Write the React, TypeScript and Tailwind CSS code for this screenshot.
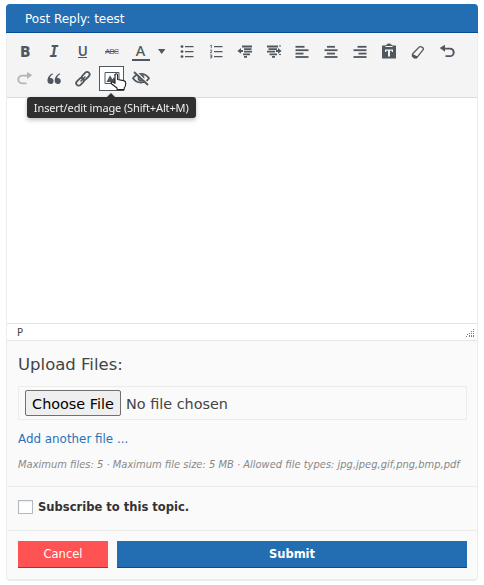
import React from "react";

const ink = "#50575e";

function Cell({ children, active = false }: { children: React.ReactNode; active?: boolean }) {
  return (
    <div className="flex h-[27px] w-[28.85px] shrink-0 items-center justify-center">
      <div
        className={
          active
            ? "flex h-[25px] w-[25px] items-center justify-center border border-[#50575e] bg-white"
            : "flex h-[25px] w-[25px] items-center justify-center"
        }
      >
        {children}
      </div>
    </div>
  );
}

function Icon({ children, className = "" }: { children: React.ReactNode; className?: string }) {
  return (
    <svg width="20" height="20" viewBox="0 0 20 20" fill={ink} className={"block shrink-0 " + className}>
      {children}
    </svg>
  );
}

function Bars({ rows }: { rows: number[][] }) {
  return (
    <Icon>
      {rows.map(([x, w], i) => (
        <rect key={i} x={x} y={3.9 + i * 3.4} width={w} height="1.8" />
      ))}
    </Icon>
  );
}

function IndentIcon({ inward = false }: { inward?: boolean }) {
  return (
    <Icon>
      {inward ? (
        <path d="M3 3.5h11v1.9H3zM15 3.5h2v1h-2zM4.5 6.2h8.5v1.7H4.5zM3 8.7h8v1.7H3zM5.5 11.4H13v1.8H5.5zM15 12.1h2v1h-2zM8 14.1h3v1.6H8zM12 7.9h2V6.1l3.6 2.8-3.6 2.8V9.9h-2z" />
      ) : (
        <path d="M7 3.5h10v1.9H7zM9 6.2h7.5v1.7H9zM9 8.7h8v1.7H9zM8 11.4h7v1.8H8zM9 14.1h3v1.6H9zM8 7.9H6V6.1L2.4 8.9 6 11.7V9.9h2z" />
      )}
    </Icon>
  );
}

function Toolbar() {
  return (
    <div className="h-[65px] border-b border-[#dddddd] bg-[#f4f4f4] pt-[5px] pl-[3.8px] font-['Noto_Sans',sans-serif] text-[#50575e]">
      <div className="flex">
        <Cell><span className="pb-px text-[15.5px] leading-5 font-extrabold">B</span></Cell>
        <Cell><span className="font-['DejaVu_Sans_Mono',monospace] text-[15px] leading-5 font-bold italic">I</span></Cell>
        <Cell><span className="flex h-[13px] w-[9px] items-center justify-center border-b-[1.5px] border-[#50575e] text-[13.5px] leading-3 font-semibold">U</span></Cell>
        <Cell>
          <span className="font-['Liberation_Sans',sans-serif] text-[7.5px] leading-none tracking-[-0.7px] line-through">ABC</span>
        </Cell>
        <Cell>
          <span className="flex h-[18px] w-[18px] shrink-0 justify-center border-b-2 border-[#50575e] text-[14.5px] leading-[15px] font-medium">A</span>
        </Cell>
        <div className="flex w-[17.6px] items-center pl-[3px]">
          <svg width="8" height="5" viewBox="0 0 8 5" fill={ink}><path d="M0 0h7.4L3.7 5z" /></svg>
        </div>
        <Cell>
          <Icon>
            <path d="M8 4h8.5v1.3H8zM8 9h8.5v1.3H8zM8 14h8.5v1.3H8z" />
            <circle cx="5" cy="4.6" r="1.4" /><circle cx="5" cy="9.6" r="1.4" /><circle cx="5" cy="14.6" r="1.4" />
          </Icon>
        </Cell>
        <Cell>
          <Icon>
            <path d="M8 4h8.5v1.3H8zM8 9h8.5v1.3H8zM8 14h8.5v1.3H8z" />
            <path fill="none" stroke={ink} strokeWidth=".8" d="m4.1 3.7 1.2-.7v3.2M4 8.1h1.8v1.3L4 10.7h2M4 12.9h1.8v1.4H4.6h1.2v1.6H4" />
          </Icon>
        </Cell>
        <Cell><IndentIcon /></Cell>
        <Cell><IndentIcon inward /></Cell>
        <Cell><Bars rows={[[3.5, 9], [3.5, 13], [3.5, 8], [3.5, 13]]} /></Cell>
        <Cell><Bars rows={[[6, 8], [3.5, 13], [6, 8], [3.5, 13]]} /></Cell>
        <Cell><Bars rows={[[7.5, 9], [3.5, 13], [8.5, 8], [3.5, 13]]} /></Cell>
        <Cell>
          <Icon>
            <path fillRule="evenodd" d="M3 3.5h3.2l1.8-1c.5-1.4 3.5-1.4 4 0l1.8 1H17v13H3zM6.5 3.9v1.2h7V3.9zM6 7.5v2.4h1.2V8.7H9v5.8h2V8.7h1.8v1.2H14V7.5z" />
          </Icon>
        </Cell>
        <Cell>
          <Icon>
            <path fill="none" stroke={ink} strokeWidth="1.3" strokeLinejoin="round" d="m4.5 12 6.8-7.1c1-.9 4.7.6 4.1 2.5l-6.8 8.4H6.2l-1.7-1.6z" />
            <path d="m4.2 11.8 5.6 2.7-1.3 1.8H6.2L4.1 14z" />
            <path fill="#f4f4f4" d="m5.5 11.9.6-.6 3.4 1.8-.7 1z" />
          </Icon>
        </Cell>
        <Cell>
          <Icon><path d="M8 2.8v2.9h5a4.7 4.7 0 0 1 0 9.4H8.5v-1.8h4.3a2.9 2.9 0 0 0 0-5.8H8v2.2L2.7 6.1z" /></Icon>
        </Cell>
      </div>

      <div className="flex">
        <Cell>
          <Icon className="opacity-40"><path d="M12 3v2.8H7a4.7 4.7 0 0 0 0 9.4h4.5v-1.8H7.2a2.9 2.9 0 0 1 0-5.8H12v2.3l5.3-3.8z" /></Icon>
        </Cell>
        <Cell>
          <Icon>
            <path d="M9 5.2C6.5 6.5 6.1 7.8 6 9.2c2-.4 3.6.8 3.6 2.7S8.3 15 6.5 15c-4.6 0-4-8.2 2-10.7zM16.2 5.2c-2.5 1.3-2.9 2.6-3 4 2-.4 3.6.8 3.6 2.7S15.5 15 13.7 15c-4.6 0-4-8.2 2-10.7z" />
          </Icon>
        </Cell>
        <Cell>
          <Icon>
            <g fill="none" stroke={ink} strokeWidth="1.8">
              <rect x="8.2" y="4.4" width="9" height="5" rx="2.5" transform="rotate(-45 12.7 6.9)" />
              <rect x="2.6" y="10.2" width="9" height="5" rx="2.5" transform="rotate(-45 7.1 12.7)" />
              <path strokeWidth="1.4" d="m7.5 12.5 5-5" />
            </g>
          </Icon>
        </Cell>
        <Cell active>
          <div className="relative h-5 w-5">
            <Icon>
              <path fill="none" stroke={ink} strokeWidth="1" d="M3 3.5h14v11H3z" />
              <path d="M4.5 13 8 6.2l2.4 4 1.6-2 2.5 4.8zM12.5 5h2v2h-2z" />
            </Icon>
            <svg className="absolute top-[4px] left-[8px]" width="17" height="18" viewBox="0 0 17 18">
              <path
                fill="#fff"
                stroke="#222"
                strokeWidth="1.1"
                strokeLinejoin="round"
                d="M5 2.2c0-2 2.6-2 2.6 0v4.3l6 1.1c1.5.3 2.2 1.1 2.2 2.6 0 2.1-.6 3.6-1.6 4.8v1.6H7v-1.6L1.7 11c-1.4-1.4.3-2.6 1.6-1.7L5 10.4z"
              />
            </svg>
            <div className="absolute top-[24px] left-[-75px] z-10 w-[169px] drop-shadow-[0_2px_2px_rgba(0,0,0,0.25)]">
              <div className="mx-auto h-0 w-0 border-x-[5px] border-b-[5px] border-x-transparent border-b-[#303030]" />
              <div className="mt-[-1px] flex h-[21px] items-center justify-center rounded-[3px] bg-[#303030] font-['Noto_Sans',sans-serif] text-[11px] leading-none tracking-[-0.13px] whitespace-nowrap text-[#f0f0f0]">
                <span>Insert/edit image (Shift+Alt+M)</span>
              </div>
            </div>
          </div>
        </Cell>
        <Cell>
          <Icon>
            <g fill="none" stroke={ink} strokeWidth="1.8">
              <path d="M2 9.2c4-5.8 12-5.8 16 0-4 5.7-12 5.7-16 0z" />
              <circle cx="10" cy="9" r="2.5" />
              <path stroke="#f4f4f4" d="m4.5 2.3 13 12.8" />
              <path d="m3 3 14 13" />
            </g>
          </Icon>
        </Cell>
      </div>
    </div>
  );
}

function ResizeHandle() {
  return (
    <svg width="10" height="9" viewBox="0 0 10 9" className="mt-[5px] text-[#84768d]" fill="currentColor">
      {[[8, 0], [6, 2], [8, 2], [4, 4], [6, 4], [8, 4], [2, 5], [4, 6], [6, 6], [8, 6], [1, 7], [4, 7], [6, 7], [8, 7]].map(([x, y]) => (
        <rect key={`${x}-${y}`} x={x} y={y} width="1" height="1" />
      ))}
    </svg>
  );
}

export default function App() {
  return (
    <main className="h-[585px] w-[484px] overflow-hidden bg-white pt-1 pl-1.5 font-['DejaVu_Sans',sans-serif]">
      <section className="w-[472px] overflow-hidden rounded-[4px]">
        <header className="h-[29px] border-b border-[#074c95] bg-[#236db3] pl-[19px] text-[12px] leading-[30px] text-white">
          Post Reply: teest
        </header>
        <div className="h-[548px] rounded-b-[4px] border-x border-b-2 border-[#ececec] bg-[#fafafa]">
          <Toolbar />
          <div className="h-[225px] bg-white" />
          <div className="flex h-[18px] justify-between border-y border-[#e5e5e5] bg-white pr-0.5 pl-[10px] text-[10px] leading-[17px] text-[#444]">
            <span>P</span>
            <ResizeHandle />
          </div>
          <div className="h-[146px] border-b border-[#ececec] px-[10px] pt-[14px] pl-[11px] text-[#444]">
            <h2 className="h-[31px] text-[16.5px] leading-5">Upload Files:</h2>
            <div className="flex h-[34px] items-center border border-[#ececec] pl-[6px] text-[14.4px]">
              <button className="mb-px flex h-[26px] w-[96px] items-center justify-center rounded-[2px] border border-[#707070] bg-[#efefef] pt-[4px] whitespace-nowrap text-black">Choose File</button>
              <span className="ml-[5px] pt-[3px]">No file chosen</span>
            </div>
            <div className="mt-[10px] h-[18px] text-[11.9px] leading-[18px] text-[#2a72b7]">Add another file ...</div>
            <p className="mt-[10px] text-[9.93px] leading-[14px] whitespace-nowrap text-[#888] italic">Maximum files: 5 · Maximum file size: 5 MB · Allowed file types: jpg,jpeg,gif,png,bmp,pdf</p>
          </div>
          <div className="flex h-[44px] items-center border-b border-[#ececec] pb-[3px] pl-[11px] text-[11.55px] font-bold text-[#333]">
            <span className="mr-[5px] mb-px h-[14px] w-[15px] border border-[#b4b9be] bg-white shadow-[inset_0_1px_2px_rgba(0,0,0,0.07)]" />
            <span className="pt-px">Subscribe to this topic.</span>
          </div>
          <div className="flex gap-[9px] pt-[10px] pr-[10px] pl-[11px] text-[11.5px] text-white">
            <button className="h-[27px] w-[90px] border-b border-[#ee1717] bg-[#ff5353] pt-[2px]">Cancel</button>
            <button className="h-[27px] flex-1 border-b border-[#074c95] bg-[#236db3] pt-[2px] font-bold">Submit</button>
          </div>
        </div>
      </section>
    </main>
  );
}
